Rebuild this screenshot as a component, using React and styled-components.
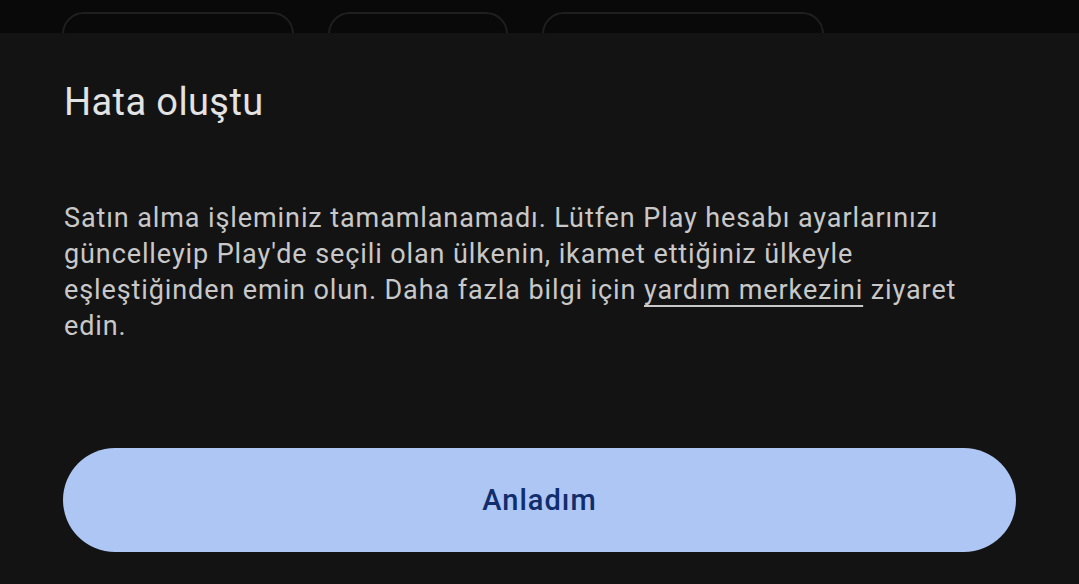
import React from "react";
import styled, { createGlobalStyle } from "styled-components";

const Global = createGlobalStyle`
  html, body { margin: 0; padding: 0; background: #131313; }
  body { font-family: Roboto, "Noto Sans", sans-serif; -webkit-font-smoothing: antialiased; }
  * { box-sizing: border-box; }
`;

const Page = styled.div`
  width: 1079px;
  height: 584px;
  overflow: hidden;
  display: flex;
  flex-direction: column;
  background: #131313;
`;

const TopStrip = styled.div`
  height: 33px;
  flex: none;
  background: #090909;
  overflow: hidden;
  display: flex;
  gap: 34px;
  padding: 12px 0 0 62px;
`;

const Chip = styled.div`
  width: ${(p) => p.$w}px;
  height: 48px;
  flex: none;
  border: 2px solid #1f1f1f;
  border-radius: 22px;
`;

const Sheet = styled.section`
  flex: 1;
  display: flex;
  flex-direction: column;
  padding: 46px 63px 0 64px;
`;

const Title = styled.h1`
  margin: 0;
  font-size: 38px;
  line-height: 46px;
  font-weight: 400;
  letter-spacing: 0.4px;
  color: #e3e3e3;
`;

const Body = styled.p`
  margin: 75px 0 0;
  font-size: 27px;
  line-height: 36px;
  letter-spacing: 0.9px;
  color: #c8c8c8;
  max-width: 925px;
`;

const Link = styled.a`
  color: inherit;
  text-decoration: underline;
  text-decoration-thickness: 2px;
  text-underline-offset: 6px;
`;

const Button = styled.button`
  margin-top: 104px;
  height: 104px;
  width: 953px;
  margin-left: -1px;
  flex: none;
  border: none;
  border-radius: 52px;
  background: #adc6f4;
  color: #102d6c;
  font-family: Roboto, "Noto Sans", sans-serif;
  font-size: 29px;
  font-weight: 500;
  letter-spacing: 1px;
  cursor: pointer;
`;

export default function App() {
  return (
    <>
      <Global />
      <Page>
        <TopStrip>
          <Chip $w={232} />
          <Chip $w={180} />
          <Chip $w={282} />
        </TopStrip>
        <Sheet>
          <Title>Hata oluştu</Title>
          <Body>
            Satın alma işleminiz tamamlanamadı. Lütfen Play hesabı ayarlarınızı
            güncelleyip Play'de seçili olan ülkenin, ikamet ettiğiniz ülkeyle
            eşleştiğinden emin olun. Daha fazla bilgi için{" "}
            <Link href="#">yardım merkezini</Link> ziyaret edin.
          </Body>
          <Button>Anladım</Button>
        </Sheet>
      </Page>
    </>
  );
}
